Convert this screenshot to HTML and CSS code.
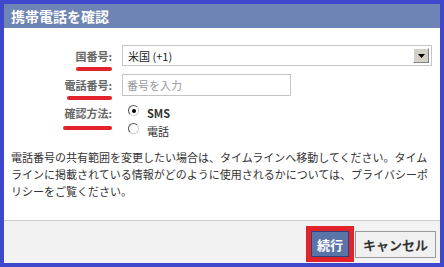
FILE: index.html
```html
<!DOCTYPE html>
<html lang="ja">

<head>
    <meta charset="UTF-8">
    <title>携帯電話を確認</title>
    <link rel="stylesheet" href="styles.css">
</head>

<body>
    <div class="dialog">
        <div class="dialog__title">携帯電話を確認</div>
        <div class="dialog__body">
            <div class="form">
                <div class="form__label"><span class="mark mark--country">国番号:</span></div>
                <div class="select">
                    <span class="select__value">米国 (+1)</span>
                    <span class="select__btn">
                        <svg width="7" height="4" viewBox="0 0 7 4"><path d="M0 0h7L3.5 4z" fill="#000"/></svg>
                    </span>
                </div>

                <div class="form__label"><span class="mark mark--phone">電話番号:</span></div>
                <div class="field"><input class="field__input" type="text" placeholder="番号を入力"></div>

                <div class="form__label form__label--top"><span class="mark mark--method">確認方法:</span></div>
                <div class="radios">
                    <div class="radios__item"><span class="radio radio--on"></span><span class="radios__text radios__text--bold">SMS</span></div>
                    <div class="radios__item"><span class="radio"></span><span class="radios__text">電話</span></div>
                </div>
            </div>
            <p class="note">電話番号の共有範囲を変更したい場合は、タイムラインへ移動してください。タイムラインに掲載されている情報がどのように使用されるかについては、プライバシーポリシーをご覧ください。</p>
        </div>
        <div class="dialog__footer">
            <button class="btn btn--primary">続行</button>
            <button class="btn">キャンセル</button>
        </div>
    </div>
</body>
</html>
```

FILE: styles.css
```css
html,
body {
    margin: 0;
    height: 100%;
}

body {
    background-color: #3f47cc;
    /* borda azul da captura */
    padding: 4px;
    box-sizing: border-box;
    font-family: "Noto Sans CJK JP", "Noto Sans", sans-serif;
    font-size: 11px;
    color: #333333;
}

.dialog {
    display: flex;
    flex-direction: column;
    height: 100%;
    background-color: #ffffff;
}

.dialog__title {
    height: 24px;
    line-height: 24px;
    padding-left: 7px;
    background-color: #6d84b4;
    color: #ffffff;
    font-size: 14px;
    font-weight: bold;
}

.dialog__body {
    padding: 17px 8px 20px 7px;
}

.form {
    display: grid;
    grid-template-columns: 101px 1fr;
    column-gap: 10px;
    row-gap: 8px;
    align-items: center;
}

.form__label {
    text-align: right;
    color: #666666;
    font-weight: bold;
    line-height: 18px;
}

.form__label--top {
    align-self: start;
}

.mark {
    position: relative;
    display: inline-block;
}

/* sublinhado vermelho desenhado por cima */
.mark::after {
    content: "";
    position: absolute;
    left: 0;
    right: 0;
    height: 4px;
    border-radius: 2px;
    background-color: #e3232b;
}

.mark--country::after {
    top: 20px;
    left: 1px;
}

.mark--phone::after {
    top: 20px;
    left: 3px;
}

.mark--method::after {
    top: 22px;
    left: -1px;
}

.select {
    display: flex;
    align-items: center;
    justify-content: space-between;
    height: 21px;
    box-sizing: border-box;
    border: 1px solid #c4c4c4;
    padding: 0 2px 0 5px;
}

.select__value {
    color: #222222;
}

.select__btn {
    display: flex;
    align-items: center;
    justify-content: center;
    width: 16px;
    height: 15px;
    box-sizing: border-box;
    background-color: #d4d0c8;
    border: 1px solid;
    border-color: #ffffff #808080 #808080 #ffffff;
}

.field__input {
    display: block;
    width: 169px;
    height: 22px;
    box-sizing: border-box;
    border: 1px solid #c4c4c4;
    padding: 0 4px;
    font-family: inherit;
    font-size: 11px;
    outline: none;
}

.field__input::placeholder {
    color: #999999;
}

.radios {
    display: flex;
    flex-direction: column;
    padding-left: 6px;
}

.radios__item {
    display: flex;
    align-items: center;
    height: 18px;
}

.radio {
    width: 11px;
    height: 11px;
    box-sizing: border-box;
    margin: 0 8px 5px 0;
    border-radius: 50%;
    border: 1px solid;
    border-color: #555555 #d0d0d0 #d0d0d0 #555555;
    background-color: #ffffff;
    display: flex;
    align-items: center;
    justify-content: center;
}

.radio--on::after {
    content: "";
    width: 4px;
    height: 4px;
    border-radius: 50%;
    background-color: #000000;
}

.radios__text {
    color: #333333;
}

.radios__text--bold {
    font-weight: bold;
}

.note {
    margin: 9px 0 0;
    line-height: 17px;
}

.dialog__footer {
    flex: 1;
    display: flex;
    justify-content: flex-end;
    align-items: flex-end;
    padding: 0 4px 5px 0;
    border-top: 1px solid #cccccc;
    background-color: #f2f2f2;
}

.btn {
    height: 27px;
    padding: 0 7px;
    margin-left: 6px;
    border: 1px solid #999999;
    background-color: #f0f0f0;
    color: #333333;
    font-family: inherit;
    font-size: 13px;
    font-weight: bold;
    cursor: pointer;
}

.btn--primary {
    height: 26px;
    margin-bottom: 1px;
    padding: 0 5px;
    background-color: #5b74a8;
    border-color: #29447e;
    color: #ffffff;
    outline: 5px solid #e3232b;
    /* destaque vermelho */
}
```
